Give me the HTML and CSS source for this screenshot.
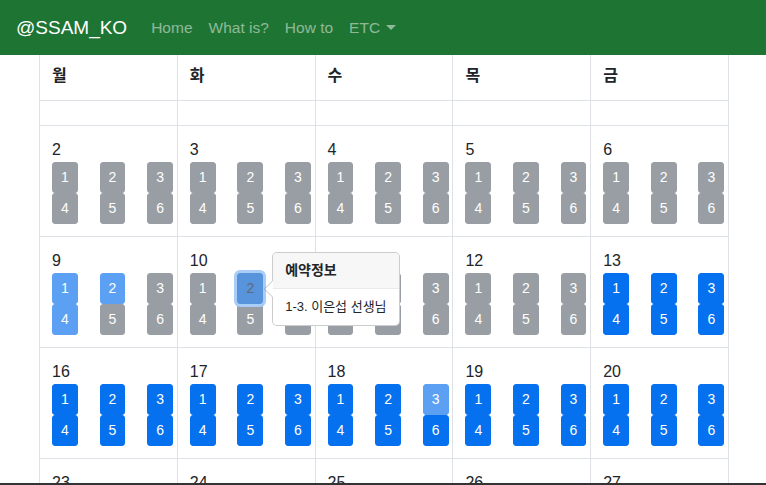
FILE: index.html
```html
<!DOCTYPE html>
<html lang="ko">
<head>
<meta charset="utf-8">
<title>@SSAM_KO</title>
<link rel="stylesheet" href="styles.css">
</head>
<body>
<nav class="navbar">
  <a class="brand">@SSAM_KO</a>
  <div class="nav">
    <a class="nav-link">Home</a>
    <a class="nav-link">What is?</a>
    <a class="nav-link">How to</a>
    <a class="nav-link dropdown">ETC</a>
  </div>
</nav>
<main class="wrap">
<table class="cal">
  <thead>
    <tr><th>월</th><th>화</th><th>수</th><th>목</th><th>금</th></tr>
  </thead>
  <tbody>
    <tr class="empty"><td></td><td></td><td></td><td></td><td></td></tr>
    <tr>
      <td><div class="date">2</div><div class="slots"><div class="col"><span class="slot off">1</span><span class="slot off">4</span></div><div class="col"><span class="slot off">2</span><span class="slot off">5</span></div><div class="col"><span class="slot off">3</span><span class="slot off">6</span></div></div></td>
      <td><div class="date">3</div><div class="slots"><div class="col"><span class="slot off">1</span><span class="slot off">4</span></div><div class="col"><span class="slot off">2</span><span class="slot off">5</span></div><div class="col"><span class="slot off">3</span><span class="slot off">6</span></div></div></td>
      <td><div class="date">4</div><div class="slots"><div class="col"><span class="slot off">1</span><span class="slot off">4</span></div><div class="col"><span class="slot off">2</span><span class="slot off">5</span></div><div class="col"><span class="slot off">3</span><span class="slot off">6</span></div></div></td>
      <td><div class="date">5</div><div class="slots"><div class="col"><span class="slot off">1</span><span class="slot off">4</span></div><div class="col"><span class="slot off">2</span><span class="slot off">5</span></div><div class="col"><span class="slot off">3</span><span class="slot off">6</span></div></div></td>
      <td><div class="date">6</div><div class="slots"><div class="col"><span class="slot off">1</span><span class="slot off">4</span></div><div class="col"><span class="slot off">2</span><span class="slot off">5</span></div><div class="col"><span class="slot off">3</span><span class="slot off">6</span></div></div></td>
    </tr>
    <tr>
      <td><div class="date">9</div><div class="slots"><div class="col"><span class="slot soft">1</span><span class="slot soft">4</span></div><div class="col"><span class="slot soft">2</span><span class="slot off">5</span></div><div class="col"><span class="slot off">3</span><span class="slot off">6</span></div></div></td>
      <td><div class="date">10</div><div class="slots"><div class="col"><span class="slot off">1</span><span class="slot off">4</span></div><div class="col"><span class="slot focus">2<span class="popover"><span class="popover-header">예약정보</span><span class="popover-body">1-3. 이은섭 선생님</span></span></span><span class="slot off">5</span></div><div class="col"><span class="slot off">3</span><span class="slot off">6</span></div></div></td>
      <td><div class="date">11</div><div class="slots"><div class="col"><span class="slot off">1</span><span class="slot off">4</span></div><div class="col"><span class="slot off">2</span><span class="slot off">5</span></div><div class="col"><span class="slot off">3</span><span class="slot off">6</span></div></div></td>
      <td><div class="date">12</div><div class="slots"><div class="col"><span class="slot off">1</span><span class="slot off">4</span></div><div class="col"><span class="slot off">2</span><span class="slot off">5</span></div><div class="col"><span class="slot off">3</span><span class="slot off">6</span></div></div></td>
      <td><div class="date">13</div><div class="slots"><div class="col"><span class="slot on">1</span><span class="slot on">4</span></div><div class="col"><span class="slot on">2</span><span class="slot on">5</span></div><div class="col"><span class="slot on">3</span><span class="slot on">6</span></div></div></td>
    </tr>
    <tr>
      <td><div class="date">16</div><div class="slots"><div class="col"><span class="slot on">1</span><span class="slot on">4</span></div><div class="col"><span class="slot on">2</span><span class="slot on">5</span></div><div class="col"><span class="slot on">3</span><span class="slot on">6</span></div></div></td>
      <td><div class="date">17</div><div class="slots"><div class="col"><span class="slot on">1</span><span class="slot on">4</span></div><div class="col"><span class="slot on">2</span><span class="slot on">5</span></div><div class="col"><span class="slot on">3</span><span class="slot on">6</span></div></div></td>
      <td><div class="date">18</div><div class="slots"><div class="col"><span class="slot on">1</span><span class="slot on">4</span></div><div class="col"><span class="slot on">2</span><span class="slot on">5</span></div><div class="col"><span class="slot soft">3</span><span class="slot on">6</span></div></div></td>
      <td><div class="date">19</div><div class="slots"><div class="col"><span class="slot on">1</span><span class="slot on">4</span></div><div class="col"><span class="slot on">2</span><span class="slot on">5</span></div><div class="col"><span class="slot on">3</span><span class="slot on">6</span></div></div></td>
      <td><div class="date">20</div><div class="slots"><div class="col"><span class="slot on">1</span><span class="slot on">4</span></div><div class="col"><span class="slot on">2</span><span class="slot on">5</span></div><div class="col"><span class="slot on">3</span><span class="slot on">6</span></div></div></td>
    </tr>
    <tr>
      <td><div class="date">23</div><div class="slots"><div class="col"><span class="slot on">1</span><span class="slot on">4</span></div><div class="col"><span class="slot on">2</span><span class="slot on">5</span></div><div class="col"><span class="slot on">3</span><span class="slot on">6</span></div></div></td>
      <td><div class="date">24</div><div class="slots"><div class="col"><span class="slot on">1</span><span class="slot on">4</span></div><div class="col"><span class="slot on">2</span><span class="slot on">5</span></div><div class="col"><span class="slot on">3</span><span class="slot on">6</span></div></div></td>
      <td><div class="date">25</div><div class="slots"><div class="col"><span class="slot on">1</span><span class="slot on">4</span></div><div class="col"><span class="slot on">2</span><span class="slot on">5</span></div><div class="col"><span class="slot on">3</span><span class="slot on">6</span></div></div></td>
      <td><div class="date">26</div><div class="slots"><div class="col"><span class="slot on">1</span><span class="slot on">4</span></div><div class="col"><span class="slot on">2</span><span class="slot on">5</span></div><div class="col"><span class="slot on">3</span><span class="slot on">6</span></div></div></td>
      <td><div class="date">27</div><div class="slots"><div class="col"><span class="slot on">1</span><span class="slot on">4</span></div><div class="col"><span class="slot on">2</span><span class="slot on">5</span></div><div class="col"><span class="slot on">3</span><span class="slot on">6</span></div></div></td>
    </tr>
  </tbody>
</table>
</main>
<div class="bottom-edge"></div>
</body>
</html>
```

FILE: styles.css
```css
* { box-sizing: border-box; }

html, body { overflow: hidden; }

body {
  margin: 0;
  font-family: "Liberation Sans", "Noto Sans CJK KR", sans-serif;
  font-size: 16px;
  line-height: 24px;
  color: #212529;
  background: #fff;
}

.navbar {
  height: 55px;
  background: #1e7433;
  display: flex;
  align-items: center;
  padding: 0 16px;
}

.brand {
  color: #fff;
  font-size: 19px;
  line-height: 30px;
  margin-right: 16px;
  padding-top: 1px;
}

.nav { display: flex; align-items: center; }

.nav-link {
  color: rgba(255, 255, 255, 0.5);
  font-size: 15.5px;
  padding: 1px 8px 0;
}

.dropdown::after {
  content: "";
  display: inline-block;
  margin-left: 6px;
  vertical-align: 3px;
  border-top: 5px solid rgba(255, 255, 255, 0.5);
  border-left: 5px solid transparent;
  border-right: 5px solid transparent;
}

.wrap { padding: 0 38px 0 39px; }

.cal {
  width: 690px;
  border-collapse: collapse;
  table-layout: fixed;
}

.cal th, .cal td {
  border: 1px solid #dee2e6;
  padding: 12px;
  vertical-align: top;
  text-align: left;
}

.cal thead th {
  border-top: 0;
  padding-top: 9px;
  padding-bottom: 12px;
  font-weight: 700;
}

.date { line-height: 24px; }

.slots {
  display: grid;
  grid-template-columns: repeat(3, minmax(0, 1fr));
  margin: 0 -15px;
}

.col {
  padding: 0 15px;
  display: flex;
  flex-direction: column;
  align-items: flex-start;
}

.slot {
  position: relative;
  display: block;
  font-size: 14px;
  line-height: 21px;
  padding: 4px 8px;
  border: 1px solid transparent;
  border-radius: 3px;
  color: #fff;
  white-space: nowrap;
}

.off { background: #989ea3; border-color: #989ea3; }
.on { background: #0571ee; border-color: #0571ee; }
.soft { background: #5ba0f3; border-color: #5ba0f3; }
.focus {
  background: #5894dc;
  border-color: #5894dc;
  color: #5f6a78;
  box-shadow: 0 0 0 3px #a9cdf6;
  z-index: 4;
}

.popover {
  position: absolute;
  left: calc(100% + 10px);
  top: 50%;
  transform: translateY(-50%);
  width: 128px;
  background: #fff;
  border: 1px solid rgba(0, 0, 0, 0.2);
  border-radius: 5px;
  z-index: 5;
  color: #212529;
  white-space: nowrap;
}

.popover::before,
.popover::after {
  content: "";
  position: absolute;
  top: 50%;
  margin-top: -8px;
  border-style: solid;
  border-width: 8px 8px 8px 0;
  border-color: transparent;
}

.popover::before {
  left: -9px;
  border-right-color: rgba(0, 0, 0, 0.25);
}

.popover::after {
  left: -8px;
  border-right-color: #fff;
}

.popover-header {
  display: block;
  padding: 8px 12px;
  font-size: 14px;
  line-height: 19px;
  font-weight: 700;
  background: #f7f7f7;
  border-bottom: 1px solid #ebebeb;
  border-radius: 4px 4px 0 0;
}

.popover-body {
  display: block;
  padding: 8px 12px;
  font-size: 13px;
  line-height: 20px;
}

.bottom-edge {
  position: fixed;
  left: 0;
  right: 0;
  bottom: 0;
  height: 2px;
  background: #333;
}
```
